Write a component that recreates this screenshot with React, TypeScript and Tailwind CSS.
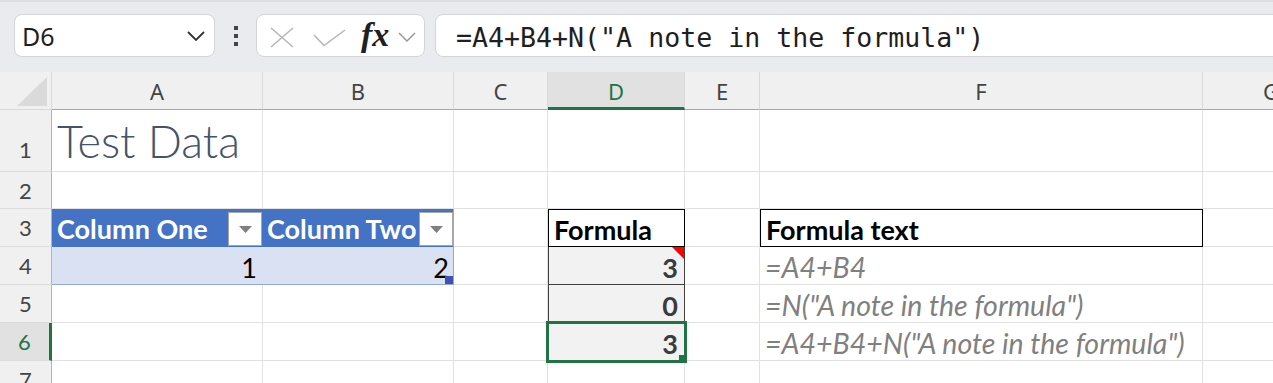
import React from 'react';

const GRID = 'border-r border-b border-[#e1e1e1]';
const CELL_FONT = "font-['Lato',sans-serif] text-[26px]";

const RowHeader: React.FC<{ n: number; active?: boolean; tall?: boolean }> = ({ n, active, tall }) => (
  <div
    className={`w-[52px] shrink-0 flex justify-center border-b border-b-[#dcdcdc] text-[22px] ${
      tall ? 'items-end pb-[3px]' : 'items-center'
    } ${
      active
        ? 'bg-[#e1e1e1] text-[#217346] border-r-[3px] border-r-[#217346]'
        : 'bg-[#f0f0f0] text-[#444] border-r border-r-[#b4b4b4]'
    }`}
  >
    <span className="leading-[37px]">{n}</span>
  </div>
);

const FilterButton: React.FC<{ right: string }> = ({ right }) => (
  <div
    className={`absolute ${right} bottom-[1px] w-[34px] h-[34px] bg-white border border-[#a6a6a6] flex items-center justify-center`}
  >
    <svg width="13" height="7" viewBox="0 0 13 7">
      <polygon points="0,0 13,0 6.5,7" fill="#7f7f7f" />
    </svg>
  </div>
);

const Toolbar: React.FC = () => (
  <div className="h-[72px] bg-[#e9ebee] border-t-2 border-[#dcdee2] flex items-start pt-[12px] pl-[14px] overflow-hidden">
    {/* name box */}
    <div className="w-[201px] h-[43px] shrink-0 bg-white rounded-[8px] border border-[#d3d5d9] flex items-center justify-between pl-[7px] pr-[9px]">
      <span className="text-[25px] text-[#1f1f1f] leading-none mt-[1px]">D6</span>
      <svg width="18" height="10" viewBox="0 0 18 10">
        <path d="M1 1 L9 9 L17 1" fill="none" stroke="#333" strokeWidth="1.8" />
      </svg>
    </div>

    {/* more dots */}
    <div className="w-[41px] h-[43px] shrink-0 flex flex-col items-center justify-center gap-[4px]">
      <div className="w-[4px] h-[4px] bg-[#444]" />
      <div className="w-[4px] h-[4px] bg-[#444]" />
      <div className="w-[4px] h-[4px] bg-[#444]" />
    </div>

    {/* cancel / enter / fx */}
    <div className="w-[169px] h-[43px] shrink-0 bg-white rounded-[8px] border border-[#d3d5d9] flex items-center pl-[13px]">
      <svg width="24" height="21" viewBox="0 0 24 21" className="mt-[3px]">
        <path d="M1 1 L23 20 M23 1 L1 20" fill="none" stroke="#b5b5b5" strokeWidth="1.5" />
      </svg>
      <svg width="33" height="18" viewBox="0 0 33 18" className="ml-[19px] mt-[5px]">
        <path d="M1 6 L11 16.5 L32 1" fill="none" stroke="#b5b5b5" strokeWidth="1.5" />
      </svg>
      <span className="ml-[15px] font-['Liberation_Serif',serif] italic font-bold text-[34px] leading-none text-[#1f1f1f] -mt-[2px]">
        fx
      </span>
      <svg width="18" height="10" viewBox="0 0 18 10" className="ml-[9px] mt-[2px]">
        <path d="M1 1 L9 9 L17 1" fill="none" stroke="#999" strokeWidth="1.5" />
      </svg>
    </div>

    {/* formula input */}
    <div className="ml-[10px] -mr-[12px] flex-1 h-[43px] bg-white rounded-[8px] border border-[#d3d5d9] flex items-center pl-[20px]">
      <span className="font-['DejaVu_Sans_Mono',monospace] text-[26.6px] text-[#1f1f1f] whitespace-nowrap leading-none mt-[5px]">
        =A4+B4+N("A note in the formula")
      </span>
    </div>
  </div>
);

const ColHeader: React.FC<{ w: string; label: string; active?: boolean; last?: boolean }> = ({ w, label, active, last }) => (
  <div
    className={`${w} shrink-0 flex justify-center ${last ? '' : 'border-r border-r-[#d9d9d9]'} ${
      active
        ? 'bg-[#e1e1e1] text-[#217346] border-b-[3px] border-b-[#217346]'
        : 'bg-[#f0f0f0] text-[#444] border-b border-b-[#a6a6a6]'
    }`}
  >
    <span className="leading-[38px] text-[22px]">{label}</span>
  </div>
);

const Sheet: React.FC = () => (
  <div className="font-['Noto_Sans',sans-serif]">
    {/* column headers */}
    <div className="flex h-[38px]">
      <div className="w-[52px] shrink-0 bg-[#f0f0f0] border-r border-r-[#d9d9d9] border-b border-b-[#d9d9d9] flex items-end justify-end pr-[4px] pb-[3px]">
        <svg width="30" height="29" viewBox="0 0 30 29">
          <polygon points="30,0 30,29 0,29" fill="#dadada" />
        </svg>
      </div>
      <ColHeader w="w-[211px]" label="A" />
      <ColHeader w="w-[191px]" label="B" />
      <ColHeader w="w-[94px]" label="C" />
      <ColHeader w="w-[137px]" label="D" active />
      <ColHeader w="w-[75px]" label="E" />
      <ColHeader w="w-[443px]" label="F" />
      <ColHeader w="w-[136px]" label="G" last />
    </div>

    {/* row 1 */}
    <div className={`flex h-[62px] ${CELL_FONT}`}>
      <RowHeader n={1} tall />
      <div className={`w-[211px] shrink-0 ${GRID} flex items-end pl-[5px] pb-[7px]`}>
        <span className="text-[45px] font-light leading-none text-[#44546a] whitespace-nowrap">Test Data</span>
      </div>
      <div className={`w-[191px] shrink-0 ${GRID}`} />
      <div className={`w-[94px] shrink-0 ${GRID}`} />
      <div className={`w-[137px] shrink-0 ${GRID}`} />
      <div className={`w-[75px] shrink-0 ${GRID}`} />
      <div className={`w-[443px] shrink-0 ${GRID}`} />
      <div className={`w-[136px] shrink-0 ${GRID}`} />
    </div>

    {/* row 2 */}
    <div className={`flex h-[37px] ${CELL_FONT}`}>
      <RowHeader n={2} />
      <div className={`w-[211px] shrink-0 ${GRID}`} />
      <div className={`w-[191px] shrink-0 ${GRID}`} />
      <div className={`w-[94px] shrink-0 ${GRID}`} />
      <div className={`w-[137px] shrink-0 ${GRID}`} />
      <div className={`w-[75px] shrink-0 ${GRID}`} />
      <div className={`w-[443px] shrink-0 ${GRID}`} />
      <div className={`w-[136px] shrink-0 ${GRID}`} />
    </div>

    {/* row 3 */}
    <div className={`flex h-[38px] ${CELL_FONT} leading-[40px]`}>
      <RowHeader n={3} />
      <div className="relative w-[211px] shrink-0 bg-[#4472c4] overflow-hidden pl-[5px] text-[27px] font-bold text-white whitespace-nowrap">
        Column One
        <FilterButton right="right-[1px]" />
      </div>
      <div className="relative w-[191px] shrink-0 bg-[#4472c4] border-r border-r-[#8ea9db] overflow-hidden pl-[4px] text-[27px] font-bold text-white whitespace-nowrap">
        Column Two
        <FilterButton right="right-0" />
      </div>
      <div className={`w-[94px] shrink-0 ${GRID}`} />
      <div className="w-[137px] shrink-0 border border-black pl-[5px] text-[27px] font-bold text-black">Formula</div>
      <div className={`w-[75px] shrink-0 ${GRID}`} />
      <div className="w-[443px] shrink-0 border border-black pl-[5px] text-[27px] font-bold text-black">Formula text</div>
      <div className={`w-[136px] shrink-0 ${GRID}`} />
    </div>

    {/* row 4 */}
    <div className={`flex h-[38px] ${CELL_FONT} leading-[41px]`}>
      <RowHeader n={4} />
      <div className="w-[211px] shrink-0 bg-[#d9e1f2] border-b border-b-[#8ea9db] text-right pr-[6px] text-[27px] text-black">1</div>
      <div className="relative w-[191px] shrink-0 bg-[#d9e1f2] border-b border-r border-[#8ea9db] text-right pr-[4px] text-[27px] text-black">
        2
        <div className="absolute right-0 bottom-0 w-[8px] h-[8px] bg-[#3f51b5]" />
      </div>
      <div className={`w-[94px] shrink-0 ${GRID}`} />
      <div className="relative w-[137px] shrink-0 bg-[#f2f2f2] border-x border-b border-[#404040] text-right pr-[6px] text-[27px] font-bold text-[#3b3b3b]">
        3
        <svg width="12" height="12" viewBox="0 0 12 12" className="absolute top-0 right-0">
          <polygon points="0,0 12,0 12,12" fill="#ff0000" />
        </svg>
      </div>
      <div className={`w-[75px] shrink-0 ${GRID}`} />
      <div className={`w-[443px] shrink-0 ${GRID} pl-[5px] italic text-[28.5px] text-[#808080] whitespace-nowrap`}>=A4+B4</div>
      <div className={`w-[136px] shrink-0 ${GRID}`} />
    </div>

    {/* row 5 */}
    <div className={`flex h-[38px] ${CELL_FONT} leading-[41px]`}>
      <RowHeader n={5} />
      <div className={`w-[211px] shrink-0 ${GRID}`} />
      <div className={`w-[191px] shrink-0 ${GRID}`} />
      <div className={`w-[94px] shrink-0 ${GRID}`} />
      <div className="w-[137px] shrink-0 bg-[#f2f2f2] border-x border-b border-[#404040] text-right pr-[6px] text-[27px] font-bold text-[#3b3b3b]">
        0
      </div>
      <div className={`w-[75px] shrink-0 ${GRID}`} />
      <div className={`w-[443px] shrink-0 ${GRID} pl-[5px] italic text-[28.5px] text-[#808080] whitespace-nowrap`}>
        =N("A note in the formula")
      </div>
      <div className={`w-[136px] shrink-0 ${GRID}`} />
    </div>

    {/* row 6 */}
    <div className={`flex h-[38px] ${CELL_FONT} leading-[41px]`}>
      <RowHeader n={6} active />
      <div className={`w-[211px] shrink-0 ${GRID}`} />
      <div className={`w-[191px] shrink-0 ${GRID}`} />
      <div className={`w-[94px] shrink-0 ${GRID}`} />
      <div className="relative w-[137px] shrink-0 bg-[#f2f2f2] border-x border-b border-[#404040] text-right pr-[6px] text-[27px] font-bold text-[#3b3b3b]">
        3
        {/* active cell selection */}
        <div className="absolute -left-[3px] -top-[2px] -right-[3px] -bottom-[3px] border-[3px] border-[#217346] z-10">
          <div className="absolute -right-[3px] -bottom-[3px] w-[8px] h-[8px] bg-[#217346]" />
        </div>
      </div>
      <div className={`w-[75px] shrink-0 ${GRID}`} />
      <div className={`w-[443px] shrink-0 ${GRID} pl-[5px] italic text-[28.5px] text-[#808080] whitespace-nowrap`}>
        =A4+B4+N("A note in the formula")
      </div>
      <div className={`w-[136px] shrink-0 ${GRID}`} />
    </div>

    {/* row 7 */}
    <div className={`flex h-[38px] ${CELL_FONT}`}>
      <RowHeader n={7} />
      <div className={`w-[211px] shrink-0 ${GRID}`} />
      <div className={`w-[191px] shrink-0 ${GRID}`} />
      <div className={`w-[94px] shrink-0 ${GRID}`} />
      <div className={`w-[137px] shrink-0 ${GRID}`} />
      <div className={`w-[75px] shrink-0 ${GRID}`} />
      <div className={`w-[443px] shrink-0 ${GRID}`} />
      <div className={`w-[136px] shrink-0 ${GRID}`} />
    </div>
  </div>
);

const App: React.FC = () => (
  <div className="w-[1273px] h-[383px] overflow-hidden bg-white font-['Noto_Sans',sans-serif]">
    <Toolbar />
    <Sheet />
  </div>
);

export default App;
